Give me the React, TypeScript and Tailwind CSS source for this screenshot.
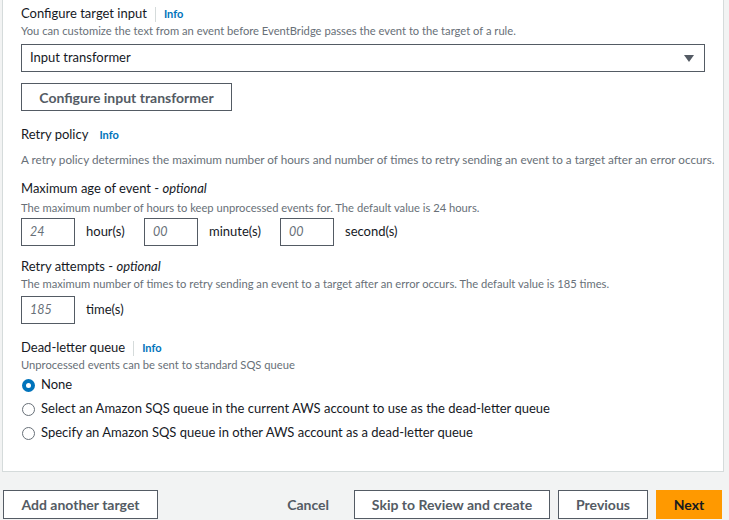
import React from 'react';

const font = { fontFamily: 'Lato, "Open Sans", sans-serif' };

function Info() {
  return <span className="text-[11px] font-bold text-[#0073bb]">Info</span>;
}

function Label({ children, info, divider }: { children: React.ReactNode; info?: boolean; divider?: boolean }) {
  return (
    <div className="flex h-[18px] items-center text-[13px] text-[#16191f]">
      <span>{children}</span>
      {info && (
        <>
          {divider ? (
            <span className="mx-[8px] h-[15px] w-px bg-[#d5dbdb]" />
          ) : (
            <span className="w-[11px]" />
          )}
          <Info />
        </>
      )}
    </div>
  );
}

function Desc({ children }: { children: React.ReactNode }) {
  return <p className="text-[11.2px] leading-[16px] text-[#687078]">{children}</p>;
}

function NumBox({ value }: { value: string }) {
  return (
    <div className="flex h-[28px] w-[54px] items-center border border-[#545b64] px-[8px] text-[12.5px] italic text-[#687078]">
      {value}
    </div>
  );
}

function Radio({ checked, label }: { checked?: boolean; label: string }) {
  return (
    <div className="flex h-[24px] items-center gap-[6px] pl-[1px]">
      {checked ? (
        <span className="flex h-[13px] w-[13px] items-center justify-center rounded-full bg-[#0073bb]">
          <span className="h-[5px] w-[5px] rounded-full bg-white" />
        </span>
      ) : (
        <span className="h-[13px] w-[13px] rounded-full border border-[#687078] bg-white" />
      )}
      <span className="text-[13px] text-[#16191f]">{label}</span>
    </div>
  );
}

export default function App() {
  return (
    <div className="h-[520px] w-[729px] overflow-hidden bg-[#f2f3f3]" style={font}>
      {/* card */}
      <div className="ml-[2px] mr-[5px] h-[472px] border-x border-b border-[#d5dbdb] bg-white px-[18px] pt-[5px]">
        <Label info divider>Configure target input</Label>
        <Desc>You can customize the text from an event before EventBridge passes the event to the target of a rule.</Desc>
        <div className="mt-[5px] flex h-[28px] w-[684px] items-center justify-between border border-[#545b64] pl-[8px] pr-[10px] text-[13px] text-[#16191f]">
          <span>Input transformer</span>
          <svg width="10" height="7" viewBox="0 0 10 7">
            <path d="M0 0 H10 L5 7 Z" fill="#545b64" />
          </svg>
        </div>
        <button className="mt-[11px] flex h-[28px] w-[211px] items-center justify-center border border-[#545b64] text-[14px] font-bold text-[#545b64]">
          Configure input transformer
        </button>

        <div className="mt-[15px]">
          <Label info>Retry policy</Label>
        </div>
        <p className="mt-[7px] whitespace-nowrap text-[11.7px] leading-[16px] text-[#687078]">
          A retry policy determines the maximum number of hours and number of times to retry sending an event to a target after an error occurs.
        </p>

        <div className="mt-[13px]">
          <Label>
            Maximum age of event -&nbsp;<i>optional</i>
          </Label>
        </div>
        <div className="mt-[2px]">
          <Desc>The maximum number of hours to keep unprocessed events for. The default value is 24 hours.</Desc>
        </div>
        <div className="mt-[2px] flex items-center text-[13px] text-[#16191f]">
          <NumBox value="24" />
          <span className="ml-[11px] w-[58px]">hour(s)</span>
          <NumBox value="00" />
          <span className="ml-[11px] w-[71px]">minute(s)</span>
          <NumBox value="00" />
          <span className="ml-[11px]">second(s)</span>
        </div>

        <div className="mt-[12px]">
          <Label>
            Retry attempts -&nbsp;<i>optional</i>
          </Label>
        </div>
        <Desc>The maximum number of times to retry sending an event to a target after an error occurs. The default value is 185 times.</Desc>
        <div className="mt-[4px] flex items-center text-[13px] text-[#16191f]">
          <NumBox value="185" />
          <span className="ml-[11px]">time(s)</span>
        </div>

        <div className="mt-[15px]">
          <Label info divider>Dead-letter queue</Label>
        </div>
        <Desc>Unprocessed events can be sent to standard SQS queue</Desc>
        <div className="flex flex-col">
          <Radio checked label="None" />
          <Radio label="Select an Amazon SQS queue in the current AWS account to use as the dead-letter queue" />
          <Radio label="Specify an Amazon SQS queue in other AWS account as a dead-letter queue" />
        </div>
      </div>

      {/* footer actions */}
      <div className="mt-[18px] flex items-center pl-[3px] pr-[7px] text-[14px] font-bold">
        <button className="flex h-[29px] w-[155px] items-center justify-center border border-[#545b64] bg-white text-[#545b64]">
          Add another target
        </button>
        <div className="ml-auto flex items-center gap-[8px]">
          <button className="mr-[13px] px-[4px] text-[#545b64]">Cancel</button>
          <button className="flex h-[29px] w-[196px] items-center justify-center border border-[#545b64] bg-white text-[#545b64]">
            Skip to Review and create
          </button>
          <button className="flex h-[29px] w-[90px] items-center justify-center border border-[#545b64] bg-white text-[#545b64]">
            Previous
          </button>
          <button className="flex h-[29px] w-[66px] items-center justify-center bg-[#ff9900] text-[#16191f]">
            Next
          </button>
        </div>
      </div>
    </div>
  );
}
